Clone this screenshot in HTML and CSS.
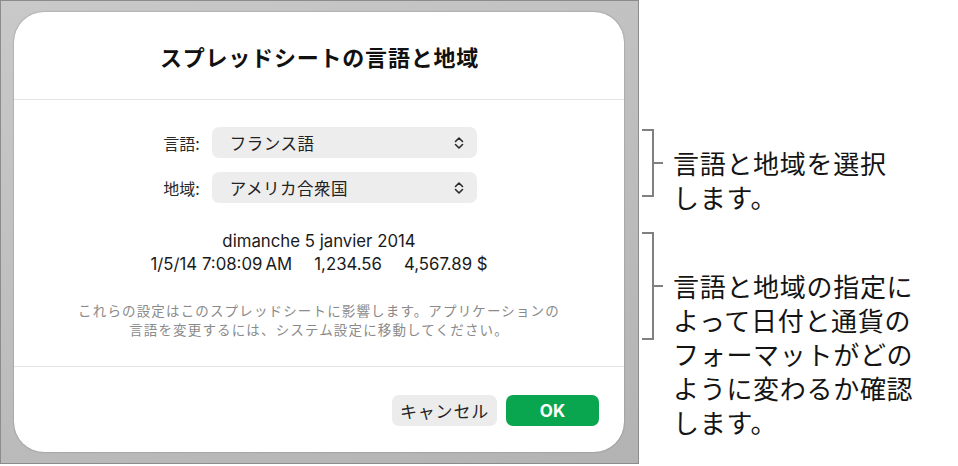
FILE: index.html
```html
<!DOCTYPE html>
<html lang="ja">
<head>
<meta charset="utf-8">
<link rel="stylesheet" href="styles.css">
</head>
<body>
<div class="page">
  <div class="frame">
    <div class="dialog">
      <div class="title">スプレッドシートの言語と地域</div>
      <div class="sep"></div>
      <div class="body">
        <div class="form">
          <div class="label">言語:</div>
          <div class="popup"><span>フランス語</span>
            <svg class="chev" width="10" height="14" viewBox="0 0 10 14"><path d="M1.5 5.5 L5 2 L8.5 5.5 M1.5 8.5 L5 12 L8.5 8.5" fill="none" stroke="#2a2a2a" stroke-width="1.6" stroke-linecap="round" stroke-linejoin="round"/></svg>
          </div>
          <div class="label">地域:</div>
          <div class="popup"><span>アメリカ合衆国</span>
            <svg class="chev" width="10" height="14" viewBox="0 0 10 14"><path d="M1.5 5.5 L5 2 L8.5 5.5 M1.5 8.5 L5 12 L8.5 8.5" fill="none" stroke="#2a2a2a" stroke-width="1.6" stroke-linecap="round" stroke-linejoin="round"/></svg>
          </div>
        </div>
        <div class="sample">
          <div>dimanche 5 janvier 2014</div>
          <div>1/5/14 7:08:09&#8239;AM<span class="sp"></span>1,234.56<span class="sp"></span>4,567.89&nbsp;$</div>
        </div>
        <div class="note">
          <div>これらの設定はこのスプレッドシートに影響します。アプリケーションの</div>
          <div>言語を変更するには、システム設定に移動してください。</div>
        </div>
      </div>
      <div class="sep"></div>
      <div class="footer">
        <div class="btn cancel">キャンセル</div>
        <div class="btn ok">OK</div>
      </div>
    </div>
  </div>
  <div class="notes">
    <div class="callout c1">
      <div class="bracket b1"></div>
      <div class="ctext t1">言語と地域を選択<br>します。</div>
    </div>
    <div class="callout c2">
      <div class="bracket b2"></div>
      <div class="ctext t2">言語と地域の指定に<br>よって日付と通貨の<br>フォーマットがどの<br>ように変わるか確認<br>します。</div>
    </div>
  </div>
</div>
</body>
</html>
```
FILE: styles.css
```css
* { box-sizing: border-box; }
html, body { margin: 0; padding: 0; background: #fff; }
body {
  width: 958px;
  height: 466px;
  overflow: hidden;
  font-family: "Inter", "Noto Sans CJK JP", sans-serif;
  color: #1d1d1d;
}
.page { display: flex; align-items: flex-start; }
.frame {
  width: 639px;
  height: 464px;
  border: 1px solid #8c8c8c;
  background: linear-gradient(160deg, #c9c9c9, #b3b3b3);
  padding: 11px 0 0 13px;
  flex: none;
}
.dialog {
  width: 610px;
  height: 440px;
  background: #fff;
  border-radius: 30px;
  box-shadow: 0 0 1.5px rgba(0,0,0,0.45);
  display: flex;
  flex-direction: column;
}
.title {
  height: 87px;
  display: flex;
  align-items: center;
  justify-content: center;
  font-family: "Noto Sans CJK JP", sans-serif;
  font-weight: 700;
  font-size: 22px;
  letter-spacing: 0.8px;
  padding-left: 1px;
  color: #111;
}
.sep { height: 1px; background: #e3e3e3; flex: none; }
.body { padding-top: 27px; height: 266px; }
.form {
  display: grid;
  grid-template-columns: auto 265px;
  justify-content: center;
  column-gap: 12px;
  row-gap: 14px;
  align-items: center;
  padding-left: 2px;
}
.label {
  font-family: "Noto Sans CJK JP", sans-serif;
  font-size: 16px;
  text-align: right;
  color: #2a2a2a;
}
.popup {
  height: 31px;
  border-radius: 7px;
  background: #ededed;
  display: flex;
  align-items: center;
  justify-content: space-between;
  padding: 0 13px 0 18px;
  font-family: "Noto Sans CJK JP", sans-serif;
  font-size: 16.5px;
  letter-spacing: 0.5px;
  color: #222;
}
.chev { display: block; }
.sample {
  margin-top: 27px;
  text-align: center;
  font-size: 16.8px;
  line-height: 23px;
  color: #1a1a1a;
}
.sp { display: inline-block; width: 22px; }
.note {
  margin-top: 25px;
  text-align: center;
  font-family: "Noto Sans CJK JP", sans-serif;
  font-size: 13.5px;
  letter-spacing: 1.15px;
  line-height: 19px;
  color: #8a8a8a;
}
.footer {
  flex: 1;
  display: flex;
  justify-content: flex-end;
  align-items: flex-start;
  padding: 28px 25px 0 0;
  gap: 9px;
}
.btn {
  height: 31px;
  border-radius: 7px;
  display: flex;
  align-items: center;
  justify-content: center;
}
.cancel {
  width: 105px;
  background: #ececec;
  font-family: "Noto Sans CJK JP", sans-serif;
  font-size: 17px;
  letter-spacing: 0.8px;
  color: #222;
}
.ok {
  width: 93px;
  background: #0aa54f;
  color: #fff;
  font-weight: 700;
  font-size: 17px;
  font-family: "Inter", sans-serif;
}
.notes {
  padding: 129px 0 0 3px;
}
.callout { display: flex; align-items: flex-start; }
.c2 { margin-top: 18px; }
.bracket {
  position: relative;
  width: 12px;
  border: 2px solid #808080;
  border-left: none;
  flex: none;
}
.bracket::after {
  content: "";
  position: absolute;
  left: 100%;
  top: 50%;
  width: 11px;
  height: 2px;
  margin-top: -1px;
  background: #808080;
}
.b1 { height: 68px; }
.b2 { height: 108px; }
.ctext {
  margin-left: 19px;
  font-family: "Noto Sans CJK JP", sans-serif;
  font-size: 26px;
  letter-spacing: 0.7px;
  line-height: 34px;
  color: #141414;
}
.t1 { margin-top: 17px; }
.t2 { margin-top: 37px; }
```
